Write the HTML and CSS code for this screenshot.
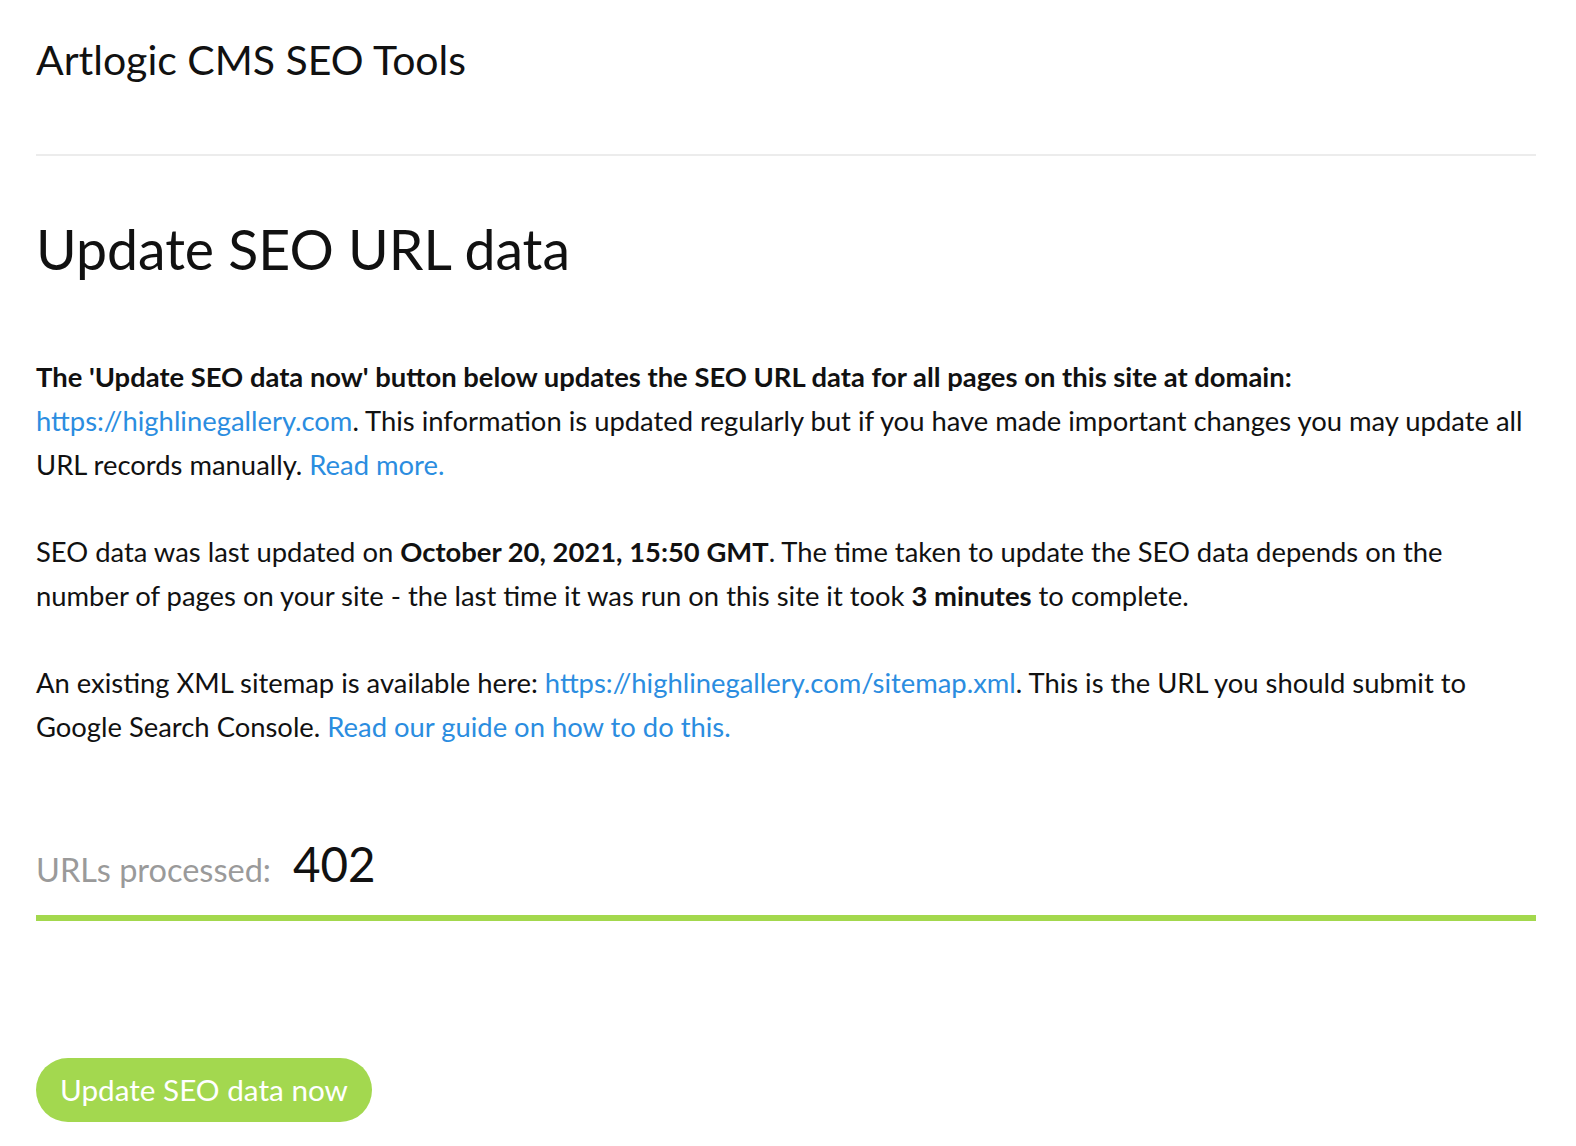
FILE: index.html
```html
<!DOCTYPE html>
<html lang="en">
<head>
<meta charset="utf-8">
<title>Artlogic CMS SEO Tools</title>
<link rel="stylesheet" href="styles.css">
</head>
<body>
<div class="page">
  <header class="site-header">
    <div class="site-title">Artlogic CMS SEO Tools</div>
  </header>
  <main class="content">
    <h1 class="page-title">Update SEO URL data</h1>
    <p class="para"><strong>The 'Update SEO data now' button below updates the SEO URL data for all pages on this site at domain:</strong> <a class="link" href="#">https://highlinegallery.com</a>. This information is updated regularly but if you have made important changes you may update all URL records manually. <a class="link" href="#">Read more.</a></p>
    <p class="para">SEO data was last updated on <strong>October 20, 2021, 15:50 GMT</strong>. The time taken to update the SEO data depends on the number of pages on your site - the last time it was run on this site it took <strong>3 minutes</strong> to complete.</p>
    <p class="para">An existing XML sitemap is available here: <a class="link" href="#">https://highlinegallery.com/sitemap.xml</a>. This is the URL you should submit to Google Search Console. <a class="link" href="#">Read our guide on how to do this.</a></p>
    <div class="progress">
      <div class="progress-row">
        <span class="progress-label">URLs processed:</span>
        <span class="progress-count">402</span>
      </div>
      <div class="progress-bar"></div>
    </div>
    <button class="btn-update" type="button">Update SEO data now</button>
  </main>
</div>
</body>
</html>
```
FILE: styles.css
```css
html, body {
  margin: 0;
  padding: 0;
  background: #fff;
}
body {
  font-family: "Lato", "Open Sans", sans-serif;
  color: #111;
}
.page {
  padding: 0 40px 0 36px;
}
.site-header {
  height: 156px;
  box-sizing: border-box;
  padding-top: 35px;
  border-bottom: 2px solid #ececec;
}
.site-title {
  font-size: 41px;
  line-height: 49px;
  color: #111;
}
.page-title {
  font-size: 55.4px;
  font-weight: 400;
  line-height: 66px;
  margin: 60px 0 73px;
  color: #111;
}
.para {
  font-size: 27.4px;
  line-height: 44px;
  margin: 0 0 43px;
}
.para:last-of-type {
  margin-bottom: 0;
}
.para strong {
  font-weight: 700;
}
.link {
  color: #2b8de0;
  text-decoration: none;
}
.progress {
  margin-top: 87px;
}
.progress-row {
  display: flex;
  align-items: baseline;
  gap: 22px;
  height: 56px;
  line-height: 56px;
}
.progress-label {
  font-size: 32.5px;
  color: #9a9a9a;
}
.progress-count {
  font-size: 47.5px;
  color: #111;
}
.progress-bar {
  height: 6px;
  background: #a3d84d;
  margin-top: 23px;
}
.btn-update {
  display: block;
  margin-top: 137px;
  height: 64px;
  padding: 0 24px;
  border: none;
  border-radius: 32px;
  background: #a3d84f;
  color: #fff;
  font-family: "Lato", "Open Sans", sans-serif;
  font-size: 29.7px;
  line-height: 64px;
  cursor: pointer;
}
```
